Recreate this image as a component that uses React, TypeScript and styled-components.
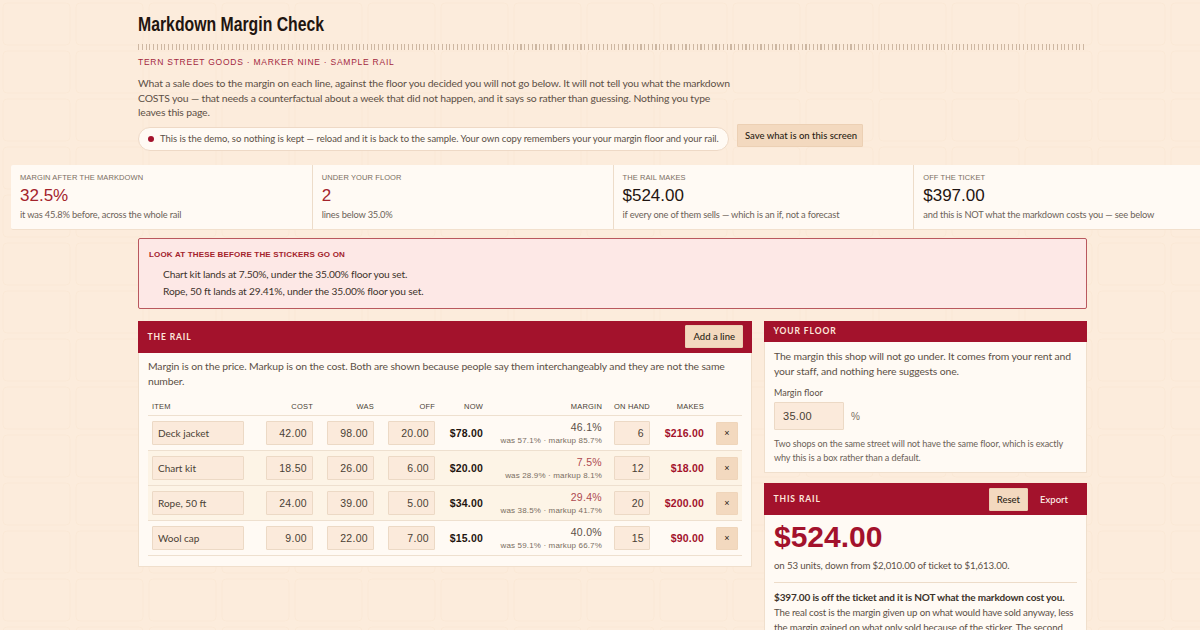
import styled, { createGlobalStyle } from 'styled-components';

const paper = "data:image/svg+xml,%3Csvg xmlns='http://www.w3.org/2000/svg' width='73' height='48'%3E%3Crect x='3' y='3' width='67' height='42' rx='4' fill='none' stroke='%23fae8d6' stroke-width='1'/%3E%3C/svg%3E";

const Global = createGlobalStyle`
  html, body { margin: 0; height: 630px; overflow: hidden; }
  body {
    background-color: #fcecdc;
    background-image: url("${paper}");
    font-family: "Lato", sans-serif;
    color: #4a3f35;
  }
  * { box-sizing: border-box; }
`;

const Page = styled.div`
  width: 1225px;
  display: flex;
  flex-direction: column;
  align-items: center;
`;
const Head = styled.header`
  width: 949px;
  padding-top: 13px;
`;
const Title = styled.h1`
  margin: 0;
  width: 240px;
  font-family: "Liberation Sans", sans-serif;
  font-size: 20px;
  line-height: 23px;
  font-weight: 700;
  color: #1f1510;
  white-space: nowrap;
  transform: scaleX(0.79);
  transform-origin: left center;
`;
const Ticks = styled.div`
  height: 6px;
  margin-top: 8px;
  background: repeating-linear-gradient(90deg, #cdb7a2 0 1px, transparent 1px 3.75px);
`;
const Tag = styled.div`
  margin-top: 7px;
  font-family: "Liberation Sans", sans-serif;
  font-size: 8.5px;
  line-height: 11px;
  letter-spacing: 0.75px;
  color: #a3283f;
`;
const Lead = styled.p`
  margin: 8px 0 0;
  width: 600px;
  font-size: 10.4px;
  line-height: 14.6px;
  letter-spacing: -0.15px;
  color: #5c5046;
`;
const NoticeRow = styled.div`
  display: flex;
  align-items: flex-start;
  gap: 8px;
  margin-top: 4px;
`;
const Pill = styled.div`
  display: flex;
  align-items: center;
  gap: 6px;
  width: 591px;
  height: 24px;
  margin-top: 3px;
  padding: 0 9px;
  background: #fffaf4;
  border: 1px solid #eed9c6;
  border-radius: 12px;
  font-size: 9.5px;
  letter-spacing: -0.05px;
  color: #5c5046;
  white-space: nowrap;
`;
const Dot = styled.span`
  width: 6px;
  height: 6px;
  border-radius: 50%;
  background: #a3122c;
  flex: none;
`;
const Button = styled.button`
  height: 23px;
  padding: 0 7px;
  background: #f3d9bf;
  border: 1px solid #ecd0b4;
  border-radius: 1px;
  font-family: "Lato", sans-serif;
  font-size: 9.5px;
  font-weight: 500;
  color: #2a1d14;
  white-space: nowrap;
`;
const SaveButton = styled(Button)`
  width: 126px;
`;
const Strip = styled.section`
  width: 1203px;
  margin-top: 14px;
  display: grid;
  grid-template-columns: repeat(4, 1fr);
  background: #fffaf4;
  border-bottom: 1px solid #f2e0cd;
  border-radius: 2px;
`;
const Metric = styled.div`
  height: 64px;
  padding: 8px 9px;
  border-left: 1px solid #eddcc9;
  &:first-child { border-left: 0; }
`;
const MetricLabel = styled.div`
  font-family: "Liberation Sans", sans-serif;
  font-size: 7.5px;
  line-height: 10px;
  letter-spacing: 0.1px;
  color: #7a6e62;
  text-transform: uppercase;
`;
const MetricValue = styled.div<{ $bad?: boolean }>`
  font-family: "Liberation Sans", sans-serif;
  font-size: 17px;
  line-height: 25px;
  color: ${p => (p.$bad ? '#a3232c' : '#1f1510')};
`;
const MetricNote = styled.div`
  font-size: 9.3px;
  line-height: 12px;
  letter-spacing: -0.17px;
  margin-top: 1px;
  color: #6c6258;
`;
const Alert = styled.section`
  width: 949px;
  height: 71px;
  margin-top: 8px;
  padding: 11px 10px;
  background: #fde8e6;
  border: 1px solid #b9585e;
  border-radius: 2px;
`;
const AlertTitle = styled.div`
  font-family: "Liberation Sans", sans-serif;
  font-size: 8px;
  font-weight: 700;
  line-height: 10px;
  letter-spacing: 0.17px;
  color: #a3232c;
  margin-bottom: 6px;
`;
const AlertLine = styled.div`
  padding-left: 14px;
  font-size: 10.2px;
  line-height: 17px;
  letter-spacing: -0.15px;
  color: #3d332b;
`;
const Columns = styled.div`
  width: 949px;
  margin-top: 12px;
  display: grid;
  grid-template-columns: 614px 323px;
  gap: 12px;
  align-items: start;
`;
const Side = styled.div`
  display: flex;
  flex-direction: column;
  gap: 10px;
`;
const Panel = styled.section`
  background: #fffaf4;
  border: 1px solid #f0dfcc;
  border-top: 0;
  border-radius: 1px;
`;
const PanelBar = styled.div<{ $tall?: boolean }>`
  display: flex;
  align-items: center;
  justify-content: space-between;
  height: ${p => (p.$tall ? '32px' : '21px')};
  margin: 0 -1px;
  padding: 0 9px 0 9.5px;
  background: #a3122c;
`;
const BarTitle = styled.span`
  font-family: "Lato", sans-serif;
  font-size: 8.5px;
  font-weight: 700;
  letter-spacing: 0.9px;
  color: #fde8dd;
`;
const BarActions = styled.div`
  display: flex;
  align-items: center;
  gap: 4px;
  padding-right: 2px;
`;
const GhostButton = styled(Button)`
  background: transparent;
  border-color: transparent;
  color: #fff3ea;
`;
const Body = styled.div<{ $top?: number; $end?: number }>`
  padding: ${p => p.$top ?? 7}px 9px ${p => p.$end ?? 9}px;
`;
const Copy = styled.p`
  margin: 0;
  font-size: 10.4px;
  line-height: 14.8px;
  letter-spacing: -0.12px;
  color: #5c5046;
`;
const RailCopy = styled(Copy)`
  padding-bottom: 10px;
`;
const CostCopy = styled(Copy)`
  font-size: 9.7px;
  letter-spacing: -0.18px;
`;
const GridRow = styled.div<{ $under?: boolean }>`
  display: grid;
  grid-template-columns: 102px 47px 49px 49px 36px 107px 36px 42px 22px;
  column-gap: 12px;
  align-items: center;
  padding: 0 4px;
  height: 35px;
  border-bottom: 1px solid #eee0cf;
  background: ${p => (p.$under ? '#fdf4e6' : 'transparent')};
`;
const HeadRow = styled(GridRow)`
  height: 18px;
`;
const HeadCell = styled.div<{ $left?: boolean }>`
  font-family: "Liberation Sans", sans-serif;
  font-size: 7.5px;
  letter-spacing: 0.2px;
  color: #4a3f35;
  text-align: ${p => (p.$left ? 'left' : 'right')};
  white-space: nowrap;
`;
const Field = styled.input`
  display: block;
  height: 24px;
  padding: 0 5px;
  background: #fbeadb;
  border: 1px solid #ecd9c5;
  border-radius: 1px;
  color: #4a3f35;
`;
const NameField = styled(Field)`
  width: 92px;
  font-family: "Lato", sans-serif;
  font-size: 10px;
`;
const NumField = styled(Field)`
  width: 100%;
  justify-self: end;
  text-align: right;
  font-family: "Liberation Sans", sans-serif;
  font-size: 10.5px;
  letter-spacing: 0.3px;
`;
const CostField = styled(NumField)`
  width: 47px;
`;
const Now = styled.div`
  font-family: "Liberation Sans", sans-serif;
  font-size: 10.5px;
  font-weight: 700;
  letter-spacing: 0.2px;
  color: #1f1510;
  text-align: right;
  white-space: nowrap;
`;
const Makes = styled(Now)`
  color: #a3122c;
  justify-self: end;
`;
const MarginCell = styled.div`
  text-align: right;
  font-family: "Liberation Sans", sans-serif;
  white-space: nowrap;
`;
const MarginPct = styled.div<{ $under?: boolean }>`
  font-size: 10.5px;
  line-height: 12.5px;
  letter-spacing: 0.3px;
  color: ${p => (p.$under ? '#ae4a50' : '#5c5046')};
`;
const MarginWas = styled.div`
  margin-top: 1px;
  font-size: 8px;
  line-height: 11px;
  letter-spacing: 0.15px;
  color: #7a6e62;
`;
const Remove = styled.button`
  width: 22px;
  height: 23px;
  padding: 0;
  background: #f3d9bf;
  border: 1px solid #efd5ba;
  border-radius: 1px;
  font-size: 9px;
  color: #2a1d14;
`;
const FieldLabel = styled.div`
  margin-top: 9px;
  font-size: 9px;
  line-height: 12px;
  color: #5c5046;
`;
const FloorRow = styled.div`
  display: flex;
  align-items: center;
  gap: 5px;
  margin-top: 3px;
`;
const FloorField = styled(Field)`
  width: 70px;
  height: 28px;
  padding: 0 8px;
  font-family: "Liberation Sans", sans-serif;
  font-size: 11px;
  letter-spacing: 0.3px;
`;
const Unit = styled.span`
  font-family: "Liberation Sans", sans-serif;
  font-size: 10px;
  color: #7a6e62;
  margin-left: 2px;
`;
const Small = styled.p`
  margin: 7px 0 0;
  font-size: 9.1px;
  line-height: 14px;
  letter-spacing: -0.12px;
  color: #6c6258;
`;
const Big = styled.div`
  font-family: "Liberation Sans", sans-serif;
  font-size: 30px;
  font-weight: 700;
  line-height: 30px;
  color: #a3122c;
`;
const Units = styled.p`
  margin: 6px 0 0;
  font-size: 9.7px;
  line-height: 14px;
  letter-spacing: -0.13px;
  color: #5c5046;
  padding-bottom: 10px;
  border-bottom: 1px solid #eddcc9;
`;
const Strong = styled.p`
  margin: 7px 0 0;
  font-size: 10px;
  line-height: 14.8px;
  font-weight: 700;
  letter-spacing: -0.15px;
  color: #3d332b;
`;

interface Line {
  name: string;
  cost: string;
  was: string;
  off: string;
  now: string;
  margin: string;
  before: string;
  hand: string;
  makes: string;
  under?: boolean;
}

const lines: Line[] = [
  { name: 'Deck jacket', cost: '42.00', was: '98.00', off: '20.00', now: '$78.00', margin: '46.1%', before: 'was 57.1% · markup 85.7%', hand: '6', makes: '$216.00' },
  { name: 'Chart kit', cost: '18.50', was: '26.00', off: '6.00', now: '$20.00', margin: '7.5%', before: 'was 28.9% · markup 8.1%', hand: '12', makes: '$18.00', under: true },
  { name: 'Rope, 50 ft', cost: '24.00', was: '39.00', off: '5.00', now: '$34.00', margin: '29.4%', before: 'was 38.5% · markup 41.7%', hand: '20', makes: '$200.00', under: true },
  { name: 'Wool cap', cost: '9.00', was: '22.00', off: '7.00', now: '$15.00', margin: '40.0%', before: 'was 59.1% · markup 66.7%', hand: '15', makes: '$90.00' },
];

const metrics = [
  { label: 'Margin after the markdown', value: '32.5%', note: 'it was 45.8% before, across the whole rail', bad: true },
  { label: 'Under your floor', value: '2', note: 'lines below 35.0%', bad: true },
  { label: 'The rail makes', value: '$524.00', note: 'if every one of them sells — which is an if, not a forecast' },
  { label: 'Off the ticket', value: '$397.00', note: 'and this is NOT what the markdown costs you — see below' },
];

export default function App() {
  return (
    <Page>
      <Global />
      <Head>
        <Title>Markdown Margin Check</Title>
        <Ticks />
        <Tag>TERN STREET GOODS · MARKER NINE · SAMPLE RAIL</Tag>
        <Lead>
          What a sale does to the margin on each line, against the floor you decided you will not go below. It will not tell you what the markdown COSTS you — that needs a counterfactual about a week that did not happen, and it says so rather than guessing. Nothing you type leaves this page.
        </Lead>
        <NoticeRow>
          <Pill>
            <Dot />
            This is the demo, so nothing is kept — reload and it is back to the sample. Your own copy remembers your your margin floor and your rail.
          </Pill>
          <SaveButton>Save what is on this screen</SaveButton>
        </NoticeRow>
      </Head>

      <Strip>
        {metrics.map(m => (
          <Metric key={m.label}>
            <MetricLabel>{m.label}</MetricLabel>
            <MetricValue $bad={m.bad}>{m.value}</MetricValue>
            <MetricNote>{m.note}</MetricNote>
          </Metric>
        ))}
      </Strip>

      <Alert>
        <AlertTitle>LOOK AT THESE BEFORE THE STICKERS GO ON</AlertTitle>
        <AlertLine>Chart kit lands at 7.50%, under the 35.00% floor you set.</AlertLine>
        <AlertLine>Rope, 50 ft lands at 29.41%, under the 35.00% floor you set.</AlertLine>
      </Alert>

      <Columns>
        <Panel>
          <PanelBar $tall>
            <BarTitle>THE RAIL</BarTitle>
            <Button>Add a line</Button>
          </PanelBar>
          <Body $top={6} $end={10}>
            <RailCopy>
              Margin is on the price. Markup is on the cost. Both are shown because people say them interchangeably and they are not the same number.
            </RailCopy>
            <HeadRow>
              <HeadCell $left>ITEM</HeadCell>
              <HeadCell>COST</HeadCell>
              <HeadCell>WAS</HeadCell>
              <HeadCell>OFF</HeadCell>
              <HeadCell>NOW</HeadCell>
              <HeadCell>MARGIN</HeadCell>
              <HeadCell>ON HAND</HeadCell>
              <HeadCell>MAKES</HeadCell>
              <span />
            </HeadRow>
            {lines.map(l => (
              <GridRow key={l.name} $under={l.under}>
                <NameField defaultValue={l.name} />
                <CostField defaultValue={l.cost} />
                <CostField defaultValue={l.was} />
                <CostField defaultValue={l.off} />
                <Now>{l.now}</Now>
                <MarginCell>
                  <MarginPct $under={l.under}>{l.margin}</MarginPct>
                  <MarginWas>{l.before}</MarginWas>
                </MarginCell>
                <NumField defaultValue={l.hand} />
                <Makes>{l.makes}</Makes>
                <Remove>×</Remove>
              </GridRow>
            ))}
          </Body>
        </Panel>

        <Side>
          <Panel>
            <PanelBar>
              <BarTitle>YOUR FLOOR</BarTitle>
            </PanelBar>
            <Body $end={7}>
              <Copy>The margin this shop will not go under. It comes from your rent and your staff, and nothing here suggests one.</Copy>
              <FieldLabel>Margin floor</FieldLabel>
              <FloorRow>
                <FloorField defaultValue="35.00" />
                <Unit>%</Unit>
              </FloorRow>
              <Small>Two shops on the same street will not have the same floor, which is exactly why this is a box rather than a default.</Small>
            </Body>
          </Panel>
          <Panel>
            <PanelBar $tall>
              <BarTitle>THIS RAIL</BarTitle>
              <BarActions>
                <Button>Reset</Button>
                <GhostButton>Export</GhostButton>
              </BarActions>
            </PanelBar>
            <Body>
              <Big>$524.00</Big>
              <Units>on 53 units, down from $2,010.00 of ticket to $1,613.00.</Units>
              <Strong>$397.00 is off the ticket and it is NOT what the markdown cost you.</Strong>
              <CostCopy>The real cost is the margin given up on what would have sold anyway, less the margin gained on what only sold because of the sticker. The second number needs a week that did not happen.</CostCopy>
            </Body>
          </Panel>
        </Side>
      </Columns>
    </Page>
  );
}
